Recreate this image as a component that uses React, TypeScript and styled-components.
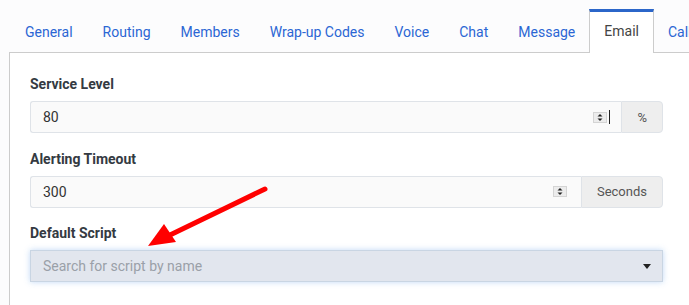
import styled, { createGlobalStyle } from "styled-components";

const GlobalStyle = createGlobalStyle`
  body {
    margin: 0;
    background: #fcfcfd;
    font-family: Roboto, "Liberation Sans", sans-serif;
    overflow: hidden;
  }
`;

const tabs = ["General", "Routing", "Members", "Wrap-up Codes", "Voice", "Chat", "Message", "Email", "Call"];

const Spinner = () => (
  <SpinBox>
    <svg width="14" height="11" viewBox="0 0 14 11">
      <rect x="0" y="0" width="14" height="11" fill="#d4d4d4" />
      <rect x="1" y="1" width="12" height="9" fill="#ececec" />
      <path d="M4.5 4.5 L7 2 L9.5 4.5 Z" fill="#222" />
      <path d="M4.5 6.5 L7 9 L9.5 6.5 Z" fill="#222" />
    </svg>
  </SpinBox>
);

const App = () => {
  return (
    <Page>
      <GlobalStyle />
      <TabBar>
        {tabs.map((t) => (
          <Tab key={t} $active={t === "Email"}>
            {t}
          </Tab>
        ))}
      </TabBar>
      <Panel>
        <Field>
          <Label>Service Level</Label>
          <InputGroup>
            <InputBox>
              <Value>80</Value>
              <Spinner />
              <Caret />
            </InputBox>
            <Addon>%</Addon>
          </InputGroup>
        </Field>
        <Field>
          <Label>Alerting Timeout</Label>
          <InputGroup>
            <InputBox>
              <Value>300</Value>
              <Spinner />
            </InputBox>
            <Addon>Seconds</Addon>
          </InputGroup>
        </Field>
        <Field>
          <Label>Default Script</Label>
          <Select>
            <Placeholder>Search for script by name</Placeholder>
            <DropCaret />
          </Select>
        </Field>
        <Arrow width="140" height="80" viewBox="0 0 140 80">
          <line x1="125" y1="9" x2="30" y2="55" stroke="#ff0000" strokeWidth="5" strokeLinecap="round" />
          <path d="M8 66 L24 44 L36 62 Z" fill="#ff0000" />
        </Arrow>
      </Panel>
    </Page>
  );
};

export default App;

const Page = styled.div`
  width: 689px;
  height: 305px;
  overflow: hidden;
  position: relative;
`;

const TabBar = styled.div`
  display: flex;
  margin-left: 9px;
  padding-left: 1px;
  padding-top: 9px;
  height: 43px;
  border-bottom: 1px solid #cccccc;
  white-space: nowrap;
`;

const Tab = styled.div<{ $active?: boolean }>`
  flex: none;
  display: flex;
  align-items: center;
  padding: 0 14px 3px;
  height: ${(p) => (p.$active ? "38px" : "40px")};
  font-size: 14px;
  color: ${(p) => (p.$active ? "#444444" : "#2b66d4")};
  background: ${(p) => (p.$active ? "#ffffff" : "transparent")};
  border: 1px solid ${(p) => (p.$active ? "#cccccc" : "transparent")};
  border-top: 3px solid ${(p) => (p.$active ? "#2b66c9" : "transparent")};
  border-bottom: none;
  margin-bottom: -1px;
  margin-left: ${(p) => (p.$active ? "-1px" : "0")};
  margin-right: ${(p) => (p.$active ? "-1px" : "0")};
`;

const Panel = styled.div`
  position: relative;
  margin-left: 9px;
  border-left: 1px solid #cccccc;
  background: #ffffff;
  height: 260px;
  padding: 21px 0 0 20px;
  display: flex;
  flex-direction: column;
  gap: 15.5px;
`;

const Field = styled.div`
  width: 633px;
  display: flex;
  flex-direction: column;
  gap: 7px;
`;

const Label = styled.label`
  font-size: 14px;
  font-weight: 700;
  color: #343a42;
  line-height: 20px;
`;

const InputGroup = styled.div`
  display: flex;
  height: 32px;
`;

const InputBox = styled.div`
  flex: 1;
  display: flex;
  align-items: center;
  padding: 0 13px 0 12px;
  background: #fafafa;
  border: 1px solid #dfe3e8;
  border-right: none;
  border-radius: 3px 0 0 3px;
`;

const Value = styled.span`
  flex: 1;
  font-size: 14px;
  color: #333333;
`;

const SpinBox = styled.span`
  display: flex;
  width: 14px;
  height: 11px;
  margin-right: 1px;
`;

const Caret = styled.span`
  width: 1px;
  height: 14px;
  background: #222222;
  margin-left: 1px;
  margin-right: -2px;
`;

const Addon = styled.div`
  display: flex;
  align-items: center;
  padding: 0 15px;
  background: #eeeeee;
  border: 1px solid #dfe3e8;
  border-radius: 0 4px 4px 0;
  font-size: 13px;
  color: #555555;
`;

const Select = styled.div`
  height: 30px;
  display: flex;
  align-items: center;
  padding: 0 12px;
  background: #e2e6ee;
  border: 1px solid #c9d5e3;
  box-shadow: 0 0 6px rgba(120, 170, 235, 0.45);
`;

const Placeholder = styled.span`
  flex: 1;
  font-size: 14px;
  color: #9aa0a8;
`;

const DropCaret = styled.span`
  width: 0;
  height: 0;
  border-left: 4px solid transparent;
  border-right: 4px solid transparent;
  border-top: 5px solid #222222;
  margin-right: -1px;
`;

const Arrow = styled.svg`
  position: absolute;
  left: 130px;
  top: 127px;
`;
